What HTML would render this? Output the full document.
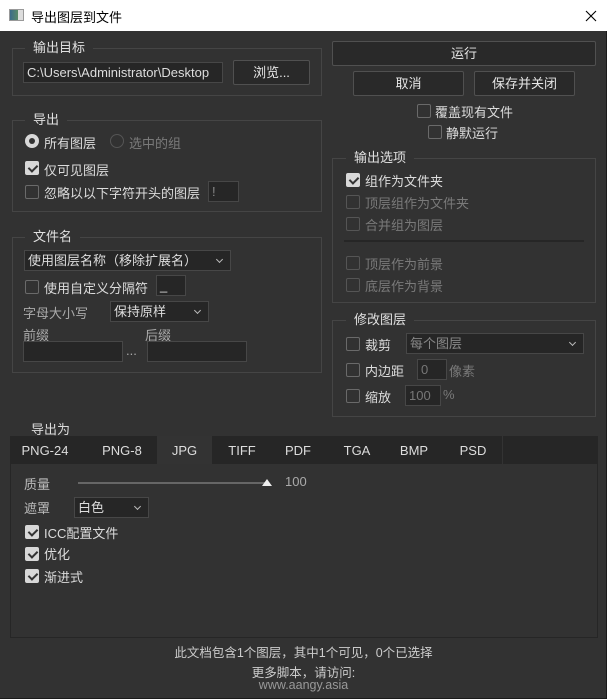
<!DOCTYPE html>
<html><head><meta charset="utf-8"><style>
*{box-sizing:border-box;margin:0;padding:0}
body{width:607px;height:699px;overflow:hidden;background:#323232;font-family:"Liberation Sans","Noto Sans CJK SC",sans-serif;font-size:13px;color:#dcdcdc;position:relative}
.a{position:absolute;white-space:nowrap}
.title{left:0;top:0;width:607px;height:31px;background:#fff;color:#000;}
.grp{position:absolute;border:1px solid #454545}
.gl{position:absolute;background:#323232;padding:0 8px;line-height:14px;color:#e0e0e0}
.in{position:absolute;background:#262626;border:1px solid #474747;line-height:19px;padding-left:3px;color:#ddd}
.btn{position:absolute;background:#292929;border:1px solid #505050;border-radius:2px;text-align:center;color:#e6e6e6}
.cb{position:absolute;width:14px;height:14px;border:1px solid #6a6a6a;border-radius:2px}
.cb.on{background:#d8d8d8;border-color:#d8d8d8}
.cb.on::after{content:"";position:absolute;left:4px;top:1px;width:4px;height:7px;border:solid #333;border-width:0 2px 2px 0;transform:rotate(45deg)}
.cb.dis{border-color:#555}
.dis{color:#7a7a7a}
.dd::after{content:"";position:absolute;right:8px;top:6px;width:4px;height:4px;border:solid #bbb;border-width:0 1px 1px 0;transform:rotate(45deg)}
.tab{position:absolute;top:436px;height:28px;line-height:30px;text-align:center;color:#ddd}
</style></head><body>
<div class="a title">
 <div class="a" style="left:9px;top:9px;width:15px;height:12px;border:1px solid #999;background:linear-gradient(90deg,#3c6b8a 0,#5a8a6a 60%,#ddd 60%)"></div>
 <div class="a" style="left:31px;top:7px;font-size:13px">导出图层到文件</div>
 <svg class="a" style="left:585px;top:10px" width="12" height="12" viewBox="0 0 12 12"><path d="M1 1L11 11M11 1L1 11" stroke="#000" stroke-width="1.1"/></svg>
</div>
<div class="a" style="left:606px;top:31px;width:1px;height:668px;background:#1a1a1a"></div>
<div class="a" style="left:0;top:698px;width:607px;height:1px;background:#1a1a1a"></div>

<div class="grp" style="left:12px;top:48px;width:310px;height:48px"></div>
<div class="gl" style="left:25px;top:41px">输出目标</div>
<div class="in" style="left:23px;top:62px;width:200px;height:21px">C:\Users\Administrator\Desktop</div>
<div class="btn" style="left:233px;top:60px;width:77px;height:25px;line-height:23px">浏览...</div>

<div class="grp" style="left:12px;top:120px;width:310px;height:92px"></div>
<div class="gl" style="left:25px;top:113px">导出</div>
<div class="a" style="left:25px;top:134px;width:14px;height:14px;border-radius:50%;background:#d8d8d8"><div class="a" style="left:4px;top:4px;width:6px;height:6px;border-radius:50%;background:#333"></div></div>
<div class="a" style="left:44px;top:133px">所有图层</div>
<div class="a" style="left:110px;top:134px;width:14px;height:14px;border-radius:50%;border:1px solid #555"></div>
<div class="a dis" style="left:129px;top:133px">选中的组</div>
<div class="cb on" style="left:25px;top:161px"></div><div class="a" style="left:44px;top:160px">仅可见图层</div>
<div class="cb" style="left:25px;top:185px"></div><div class="a" style="left:44px;top:183px">忽略以以下字符开头的图层</div>
<div class="in" style="left:208px;top:181px;width:31px;height:21px;color:#888">!</div>

<div class="grp" style="left:12px;top:237px;width:310px;height:136px"></div>
<div class="gl" style="left:25px;top:230px">文件名</div>
<div class="in dd" style="left:24px;top:250px;width:207px;height:21px">使用图层名称（移除扩展名）</div>
<div class="cb" style="left:25px;top:280px"></div><div class="a" style="left:44px;top:278px">使用自定义分隔符</div>
<div class="in" style="left:156px;top:275px;width:30px;height:21px">_</div>
<div class="a dis" style="left:23px;top:303px;color:#aaa">字母大小写</div>
<div class="in dd" style="left:110px;top:301px;width:99px;height:21px">保持原样</div>
<div class="a" style="left:23px;top:325px;color:#aaa">前缀</div>
<div class="a" style="left:145px;top:325px;color:#aaa">后缀</div>
<div class="in" style="left:23px;top:341px;width:100px;height:21px"></div>
<div class="a" style="left:126px;top:343px;color:#aaa">...</div>
<div class="in" style="left:147px;top:341px;width:100px;height:21px"></div>

<div class="btn" style="left:332px;top:41px;width:264px;height:25px;line-height:23px">运行</div>
<div class="btn" style="left:353px;top:71px;width:111px;height:25px;line-height:23px">取消</div>
<div class="btn" style="left:474px;top:71px;width:101px;height:25px;line-height:23px">保存并关闭</div>
<div class="cb" style="left:417px;top:104px"></div><div class="a" style="left:435px;top:102px">覆盖现有文件</div>
<div class="cb" style="left:428px;top:125px"></div><div class="a" style="left:446px;top:123px">静默运行</div>

<div class="grp" style="left:332px;top:158px;width:264px;height:145px"></div>
<div class="gl" style="left:346px;top:151px">输出选项</div>
<div class="cb on" style="left:346px;top:173px"></div><div class="a" style="left:365px;top:171px">组作为文件夹</div>
<div class="cb dis" style="left:346px;top:195px"></div><div class="a dis" style="left:365px;top:193px">顶层组作为文件夹</div>
<div class="cb dis" style="left:346px;top:217px"></div><div class="a dis" style="left:365px;top:215px">合并组为图层</div>
<div class="a" style="left:344px;top:240px;width:240px;height:2px;background:#262626"></div>
<div class="cb dis" style="left:346px;top:256px"></div><div class="a dis" style="left:365px;top:254px">顶层作为前景</div>
<div class="cb dis" style="left:346px;top:278px"></div><div class="a dis" style="left:365px;top:276px">底层作为背景</div>

<div class="grp" style="left:332px;top:320px;width:264px;height:97px"></div>
<div class="gl" style="left:346px;top:313px">修改图层</div>
<div class="cb" style="left:346px;top:337px"></div><div class="a" style="left:365px;top:335px">裁剪</div>
<div class="in dd" style="left:406px;top:333px;width:178px;height:21px;color:#888">每个图层</div>
<div class="cb" style="left:346px;top:363px"></div><div class="a" style="left:365px;top:361px">内边距</div>
<div class="in" style="left:417px;top:359px;width:30px;height:21px;color:#777">0</div>
<div class="a dis" style="left:449px;top:361px">像素</div>
<div class="cb" style="left:346px;top:389px"></div><div class="a" style="left:365px;top:387px">缩放</div>
<div class="in" style="left:405px;top:385px;width:36px;height:21px;color:#777">100</div>
<div class="a dis" style="left:443px;top:387px">%</div>

<div class="a" style="left:10px;top:436px;width:588px;height:202px;border:1px solid #262626;border-top:none"></div>
<div class="a" style="left:10px;top:436px;width:588px;height:28px;background:#262626"></div>
<div class="a" style="left:31px;top:419px;z-index:2">导出为</div>
<div class="a" style="left:157px;top:436px;width:55px;height:28px;background:#333"></div>
<div class="tab" style="left:10px;width:70px">PNG-24</div>
<div class="tab" style="left:88px;width:68px">PNG-8</div>
<div class="tab" style="left:157px;width:55px">JPG</div>
<div class="tab" style="left:214px;width:56px">TIFF</div>
<div class="tab" style="left:270px;width:56px">PDF</div>
<div class="tab" style="left:328px;width:58px">TGA</div>
<div class="tab" style="left:386px;width:56px">BMP</div>
<div class="tab" style="left:444px;width:58px">PSD</div>
<div class="a" style="left:502px;top:436px;width:1px;height:28px;background:#333"></div>

<div class="a" style="left:24px;top:474px;color:#bbb">质量</div>
<div class="a" style="left:78px;top:482px;width:190px;height:2px;background:#666"></div>
<div class="a" style="left:262px;top:479px;width:0;height:0;border-left:5px solid transparent;border-right:5px solid transparent;border-bottom:7px solid #eee"></div>
<div class="a" style="left:285px;top:474px;color:#aaa">100</div>
<div class="a" style="left:24px;top:498px;color:#bbb">遮罩</div>
<div class="in dd" style="left:74px;top:497px;width:75px;height:21px">白色</div>
<div class="cb on" style="left:25px;top:525px"></div><div class="a" style="left:44px;top:523px">ICC配置文件</div>
<div class="cb on" style="left:25px;top:547px"></div><div class="a" style="left:44px;top:544px">优化</div>
<div class="cb on" style="left:25px;top:569px"></div><div class="a" style="left:44px;top:567px">渐进式</div>

<div class="a" style="left:0;width:607px;top:642px;text-align:center;color:#ccc;font-size:12.5px">此文档包含1个图层，其中1个可见，0个已选择</div>
<div class="a" style="left:0;width:607px;top:662px;text-align:center;color:#ccc;font-size:12.5px">更多脚本，请访问:</div>
<div class="a" style="left:0;width:607px;top:678px;text-align:center;color:#999;font-size:12.5px">www.aangy.asia</div>
</body></html>
